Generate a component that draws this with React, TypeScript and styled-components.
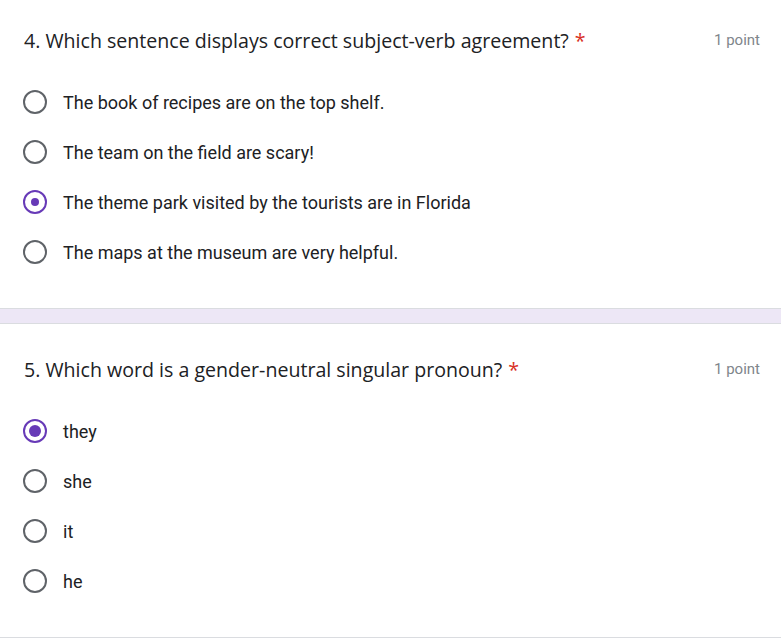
import styled, {createGlobalStyle} from 'styled-components';

const GlobalStyle = createGlobalStyle`
  html, body {
    margin: 0;
    padding: 0;
    background: #ffffff;
  }
`;

const Page = styled.div`
  width: 781px;
  font-family: Roboto, 'Liberation Sans', sans-serif;
  color: #202124;
`;

const Card = styled.div<{ $top: number }>`
  background: #ffffff;
  padding: ${p => p.$top}px 21px 31px 24px;
  border-bottom: 1px solid #dadce0;
`;

const Gap = styled.div`
  height: 14px;
  background: #ede7f6;
  border-bottom: 1px solid #dadce0;
`;

const TitleRow = styled.div`
  display: flex;
  justify-content: space-between;
  align-items: center;
  height: 24px;
`;

const Title = styled.div`
  font-family: 'Open Sans', Roboto, sans-serif;
  font-size: 19.6px;
`;

const Star = styled.span`
  color: #d93025;
  margin-left: 6px;
`;

const Points = styled.div`
  font-size: 15px;
  color: #80868b;
`;

const Options = styled.div`
  margin-top: 25px;
  display: flex;
  flex-direction: column;
`;

const Option = styled.label`
  display: flex;
  align-items: center;
  height: 50px;
  font-size: 18px;
`;

const Radio = styled.span<{ $checked: boolean; $dot: number }>`
  box-sizing: border-box;
  width: 24px;
  height: 24px;
  margin-left: -1px;
  margin-right: 16px;
  border-radius: 50%;
  border: 2px solid ${p => (p.$checked ? '#673ab7' : '#5f6368')};
  display: flex;
  align-items: center;
  justify-content: center;

  &::after {
    content: '';
    width: ${p => p.$dot}px;
    height: ${p => p.$dot}px;
    border-radius: 50%;
    background: ${p => (p.$checked ? '#673ab7' : 'transparent')};
  }
`;

type Question = {
    num: number;
    text: string;
    options: string[];
    selected: number;
    dot: number;
    top: number;
};

const questions: Question[] = [
    {
        num: 4,
        text: 'Which sentence displays correct subject-verb agreement?',
        options: [
            'The book of recipes are on the top shelf.',
            'The team on the field are scary!',
            'The theme park visited by the tourists are in Florida',
            'The maps at the museum are very helpful.',
        ],
        selected: 2,
        dot: 8,
        top: 28,
    },
    {
        num: 5,
        text: 'Which word is a gender-neutral singular pronoun?',
        options: ['they', 'she', 'it', 'he'],
        selected: 0,
        dot: 12,
        top: 33,
    },
];

const App = () => {
    return (
        <Page>
            <GlobalStyle/>
            {questions.map((q, i) =>
                <div key={q.num}>
                    <Card $top={q.top}>
                        <TitleRow>
                            <Title>{q.num}. {q.text}<Star>*</Star></Title>
                            <Points>1 point</Points>
                        </TitleRow>
                        <Options>
                            {q.options.map((o, j) =>
                                <Option key={o}>
                                    <Radio $checked={j === q.selected} $dot={q.dot}/>
                                    {o}
                                </Option>)}
                        </Options>
                    </Card>
                    {i === 0 && <Gap/>}
                </div>)}
        </Page>
    );
}

export default App;
